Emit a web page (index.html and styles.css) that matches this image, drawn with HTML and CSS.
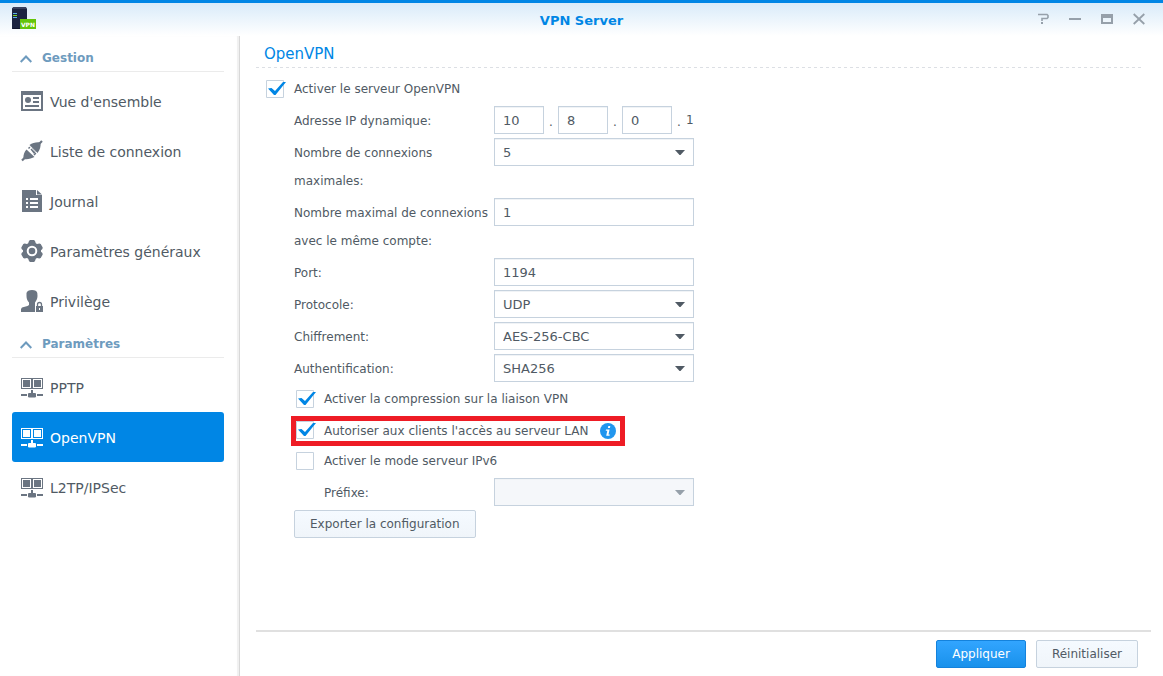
FILE: index.html
```html
<!DOCTYPE html>
<html lang="fr">
<head>
<meta charset="utf-8">
<title>VPN Server</title>
<link rel="stylesheet" href="styles.css">
</head>
<body>
<svg class="defs" aria-hidden="true">
  <symbol id="net" viewBox="0 -2 22 22">
    <path d="M0 0h11v11H0zM11 0h11v11H11z" fill="currentColor"/>
    <path class="net-gap" d="M1 1h9v9H1zM12 1h9v9h-9z"/>
    <path d="M2 2h7v7H2zM13 2h7v7h-7zM10 12h2v3h2.500l.5 1v3l-1 .5H8L7 19v-3l.5-1H10zM0 16h6v2H0zM16 16h6v2h-6z" fill="currentColor"/>
  </symbol>
  <symbol id="chevron" viewBox="0 0 12 8"><path d="M.7 7 6 1.500 11.300 7" fill="none" stroke="currentColor" stroke-width="2"/></symbol>
</svg>
<div class="window">
  <header class="titlebar">
    <svg class="app-icon" viewBox="0 0 26 24" aria-hidden="true">
      <path d="M0 1h14l1 1v20H0V2z" fill="#1b2340"/>
      <path d="M1 0h13l1 2H0z" fill="#39415e"/>
      <path d="M1 21h12v1H1z" fill="#10152b"/>
      <path d="M1 6.500h4M1 10.500h4" stroke="#5cb3e8"/>
      <path d="M1 8.500h4" stroke="#7ed321"/>
      <path d="M8 12h16v10H8z" fill="#63c50a"/>
      <text class="app-icon-text" x="16" y="20" text-anchor="middle">VPN</text>
    </svg>
    <h1 class="window-title">VPN Server</h1>
    <div class="window-controls">
      <button class="control" type="button" aria-label="Aide"><svg viewBox="0 0 12 12"><path d="M1 1.500h9l1 1v2l-1 1H5V8" fill="none" stroke="currentColor" stroke-width="1.600"/><path d="M4 9h2v2H4z" fill="currentColor"/></svg></button>
      <button class="control" type="button" aria-label="Réduire"><svg viewBox="0 0 12 12"><path d="M0 5h12v2H0z" fill="currentColor"/></svg></button>
      <button class="control" type="button" aria-label="Agrandir"><svg viewBox="0 0 12 12"><path d="M0 1h12v10H0zM2 5v4h8V5z" fill="currentColor" fill-rule="evenodd"/></svg></button>
      <button class="control" type="button" aria-label="Fermer"><svg viewBox="0 0 12 12"><path d="M.7 1l10.600 10M11.300 1 .7 11" fill="none" stroke="currentColor" stroke-width="1.800"/></svg></button>
    </div>
  </header>
  <div class="columns">
    <nav class="sidebar">
      <h2 class="group-title"><svg class="chevron"><use href="#chevron"/></svg>Gestion</h2>
      <a class="item" href="#overview"><svg class="item-icon" viewBox="0 0 22 22"><path fill-rule="evenodd" d="M0 1h22v20H0zM2 5v14h18V5z" fill="currentColor"/><circle cx="7" cy="10" r="3" fill="currentColor"/><path d="M12 7h6v2h-6zM12 11h6v2h-6zM4 15h14v2H4z" fill="currentColor"/></svg>Vue d'ensemble</a>
      <a class="item" href="#connections"><svg class="item-icon" viewBox="0 0 22 22"><path fill="none" stroke="currentColor" stroke-width="2.200" d="M1 20.500l3-3M18 4l3-3"/><path fill="currentColor" d="M2.500 19C2 15 3.500 11.500 5.500 9.500l8 7.500c-3 1.500-7 3-11 2zM19.500 2.500c.5 4-.5 7-3 10.500L8.500 5c3-2 7-3.200 11-2.500z"/><path d="M7.500 8.500l1.800-1.800M13 15l2-2" stroke="currentColor" stroke-width="1.500"/><path d="M9.500 9.500l1.500-1.500 4 4-2 2z" fill="currentColor"/><path d="M7.200 5.200l9.600 9" stroke="#fff" stroke-width=".8"/></svg>Liste de connexion</a>
      <a class="item" href="#log"><svg class="item-icon" viewBox="0 0 22 22"><path fill="currentColor" d="M1 0h14v5h6v17H1zM16 0l5 4.500h-5z"/><path fill="#fff" d="M5 8h2v2H5zM9 8h8v2H9zM5 12h2v2H5zM9 12h8v2H9zM5 16h2v2H5zM9 16h8v2H9z"/></svg>Journal</a>
      <a class="item" href="#general"><svg class="item-icon" viewBox="0 0 22 22"><path fill="currentColor" d="M8 1l1-1h4l1 1 .8 2.300 1.200.7 2.300-.5 1.400.6 2 3.500-.3 1.300L20 10.300v1.400l1.400 1.400.3 1.300-2 3.500-1.400.6L16 18l-1.200.7L14 21l-1 1H9l-1-1-.8-2.300L6 18l-2.300.5-1.400-.6-2-3.500.3-1.300L2 11.700v-1.400L.6 8.900.3 7.600l2-3.500 1.400-.6L6 4l1.200-.7z"/><circle cx="11" cy="11" r="4.300" fill="none" stroke="#fff" stroke-width="2"/></svg>Paramètres généraux</a>
      <a class="item" href="#privilege"><svg class="item-icon" viewBox="0 0 22 22"><path fill="currentColor" d="M5.500 3C6 1 8 0 11 0s5 1 5.300 3l.2 3c0 3-1.300 5-2.500 6.500V15l1 1v6H0v-3l1-1.500 5.500-1.500 1.500-1v-2.500C6.500 11 5.500 9 5.500 6z"/><path fill="#fff" d="M14 22v-7l1-1v-1.500L17 11h3l2 2v9z"/><path fill="currentColor" d="M15 16h7v6h-7z"/><path d="M16.500 16v-1.500q0-2 2-2t2 2V16" fill="none" stroke="currentColor" stroke-width="1.300"/><path fill="#fff" d="M18 18h1v2h-1z"/></svg>Privilège</a>
      <h2 class="group-title group-next"><svg class="chevron"><use href="#chevron"/></svg>Paramètres</h2>
      <a class="item" href="#pptp"><svg class="item-icon"><use href="#net"/></svg>PPTP</a>
      <a class="item active" href="#openvpn" aria-current="page"><svg class="item-icon"><use href="#net"/></svg>OpenVPN</a>
      <a class="item" href="#l2tp"><svg class="item-icon"><use href="#net"/></svg>L2TP/IPSec</a>
    </nav>
    <main class="content">
      <form class="form">
        <h2 class="section-title">OpenVPN</h2>
        <label class="check"><input type="checkbox" checked>Activer le serveur OpenVPN</label>
        <div class="fields">
          <div class="row">
            <label class="label" for="ip1">Adresse IP dynamique:</label>
            <div class="ip">
              <input class="box" id="ip1" type="text" value="10"><span class="dot">.</span>
              <input class="box" type="text" value="8" aria-label="Deuxième octet"><span class="dot">.</span>
              <input class="box" type="text" value="0" aria-label="Troisième octet"><span class="dot">.</span><span>1</span>
            </div>
          </div>
          <div class="row"><label class="label" for="max">Nombre de connexions<br>maximales:</label><select class="box" id="max"><option>5</option></select></div>
          <div class="row"><label class="label" for="same">Nombre maximal de connexions<br>avec le même compte:</label><input class="box" id="same" type="text" value="1"></div>
          <div class="row"><label class="label" for="port">Port:</label><input class="box" id="port" type="text" value="1194"></div>
          <div class="row"><label class="label" for="proto">Protocole:</label><select class="box" id="proto"><option>UDP</option></select></div>
          <div class="row"><label class="label" for="cipher">Chiffrement:</label><select class="box" id="cipher"><option>AES-256-CBC</option></select></div>
          <div class="row"><label class="label" for="auth">Authentification:</label><select class="box" id="auth"><option>SHA256</option></select></div>
          <label class="check nested"><input type="checkbox" checked>Activer la compression sur la liaison VPN</label>
          <label class="check highlight"><input type="checkbox" checked>Autoriser aux clients l'accès au serveur LAN<svg class="info" viewBox="0 0 16 16" role="img" aria-label="Information"><circle cx="8" cy="8" r="8" fill="#2196ee"/><path d="M8.300 3h2l-.4 2h-2zM6 6.500h3.600L8.500 11.500h1.300l-.3 1.300H6.200L7.300 7.800H5.700z" fill="#fff"/></svg></label>
          <label class="check nested"><input type="checkbox">Activer le mode serveur IPv6</label>
          <div class="row"><label class="label prefix" for="prefix">Préfixe:</label><select class="box" id="prefix" disabled><option></option></select></div>
          <button class="button" type="button">Exporter la configuration</button>
        </div>
      </form>
      <footer class="footer">
        <button class="button primary" type="button">Appliquer</button>
        <button class="button" type="button">Réinitialiser</button>
      </footer>
    </main>
  </div>
</div>
</body>
</html>
```
FILE: styles.css
```css
* { box-sizing: border-box; }

body {
  margin: 0;
  background: #fff;
  color: #505a64;
  font: 12px/28px "DejaVu Sans", sans-serif;
}

h1, h2 { margin: 0; }
button, input, select { margin: 0; color: inherit; font: inherit; }
.defs { position: absolute; width: 0; height: 0; }

.window {
  display: flex;
  flex-direction: column;
  min-height: 100vh;
}

.titlebar {
  display: grid;
  grid-template-columns: 1fr auto 1fr;
  align-items: center;
  height: 36px;
  padding: 0 12px;
  border-top: 3px solid #0086e5;
  background: linear-gradient(#d9ebf9, #fff);
}
.app-icon { width: 26px; height: 24px; margin-bottom: 2px; }
.app-icon-text { fill: #fff; font: bold 6px "DejaVu Sans", sans-serif; }
.window-title { padding-top: 2px; color: #0086e5; font-size: 13px; }
.window-controls {
  display: flex;
  justify-content: flex-end;
  gap: 20px;
  margin: 0 6px 2px 0;
}
.control {
  display: flex;
  padding: 0;
  border: 0;
  background: none;
  color: #96a0aa;
}
.control svg { width: 12px; height: 12px; }

.columns { display: flex; flex: 1; }

.sidebar {
  flex: 0 0 240px;
  padding: 8px 15px 0 12px;
  border-right: 1px solid #d8d8d8;
  box-shadow: inset -2px 0 1px #f0f0f0;
}
.group-title {
  display: flex;
  align-items: center;
  gap: 10px;
  margin-bottom: 4px;
  padding: 2px 0 0 8px;
  border-bottom: 1px solid #ebebeb;
  color: #6e9bbe;
  font-size: 12px;
  line-height: 25px;
}
.group-next { margin-top: 4px; }
.chevron { width: 12px; height: 8px; }
.item {
  --gap: #fff;
  display: flex;
  align-items: center;
  gap: 7px;
  height: 50px;
  padding: 2px 0 0 9px;
  border-radius: 3px;
  color: #505a64;
  font-size: 14px;
  text-decoration: none;
}
.item-icon { width: 22px; height: 22px; margin-bottom: 2px; color: #6b7582; }
.net-gap { fill: var(--gap); }
.active { --gap: #0086e5; background: #0086e5; color: #fff; }
.active .item-icon { color: #fff; }

.content {
  display: flex;
  flex: 1;
  flex-direction: column;
  padding: 4px 12px 0 16px;
}
.form { flex: 1; }
.section-title {
  margin: 0 10px 8px 0;
  padding-left: 8px;
  background: repeating-linear-gradient(90deg, #dcdfe4 0 3px, transparent 3px 6px) bottom / 100% 1px no-repeat;
  color: #0086e5;
  font-size: 15px;
  font-weight: normal;
}

.check {
  display: flex;
  align-items: center;
  gap: 8px;
  width: fit-content;
  height: 26px;
  margin-left: 10px;
}
.check input {
  appearance: none;
  width: 20px;
  height: 18px;
  background: url("data:image/svg+xml,%3Csvg xmlns='http://www.w3.org/2000/svg' width='20' height='18'%3E%3Cpath d='M.5.5h17v17H.5z' fill='%23fff' stroke='%23c6d2de'/%3E%3C/svg%3E") no-repeat;
}
.check input:checked {
  background-image: url("data:image/svg+xml,%3Csvg xmlns='http://www.w3.org/2000/svg' width='20' height='18'%3E%3Cpath d='M.5.5h17v17H.5z' fill='%23fff' stroke='%23c6d2de'/%3E%3Cpath d='M2 8.500l3.500-.5 3.500 3L17 2h3L9.500 15H8z' fill='%230086e5'/%3E%3C/svg%3E");
}
.fields {
  display: flex;
  flex-direction: column;
  gap: 4px;
  margin-top: 4px;
  padding-left: 38px;
}
.nested { margin-left: 2px; }
.highlight {
  height: 30px;
  margin: 0 0 -2px -3px;
  padding-right: 4px;
  border: 5px solid #ee1c25;
}
.highlight input { align-self: flex-start; }
.info { width: 16px; height: 16px; margin-left: 4px; }

.row { display: flex; }
.label { flex: 0 0 200px; padding-top: 1px; white-space: nowrap; line-height: 28px; margin-bottom: -1px; }
.prefix { padding-left: 30px; }
.box {
  width: 200px;
  height: 28px;
  padding: 0 8px;
  border: 1px solid #c6d2de;
  border-radius: 0;
  outline: 0;
  background: #fff;
  box-shadow: inset 0 1px #f0f3f6;
  font-size: 13px;
}
input.box { padding-top: 2px; }
select.box {
  appearance: none;
  background: #fff url("data:image/svg+xml,%3Csvg xmlns='http://www.w3.org/2000/svg' width='10' height='5'%3E%3Cpath d='M0 0h10L5.500 5h-1z' fill='%23505a64'/%3E%3C/svg%3E") right 8px center no-repeat;
}
select.box:disabled {
  background-color: #f5f7fa;
  background-image: url("data:image/svg+xml,%3Csvg xmlns='http://www.w3.org/2000/svg' width='10' height='5'%3E%3Cpath d='M0 0h10L5.500 5h-1z' fill='%2396a0aa'/%3E%3C/svg%3E");
  opacity: 1;
}
.ip { display: flex; width: 200px; height: 28px; }
.ip .box { width: 50px; }
.dot { width: 14px; padding-top: 2px; text-align: center; }

.button {
  align-self: flex-start;
  height: 28px;
  padding: 0 15px;
  border: 1px solid #c6d2de;
  border-radius: 2px;
  background: linear-gradient(#f5faff, #f0f5fa);
  line-height: 26px;
}
.primary {
  border-color: #1482dc;
  background: linear-gradient(#32a5ff, #1991eb);
  color: #fff;
}
.footer {
  display: flex;
  justify-content: flex-end;
  gap: 10px;
  padding: 8px 13px 8px 0;
  border-top: 2px solid #e0e0e0;
}
```
